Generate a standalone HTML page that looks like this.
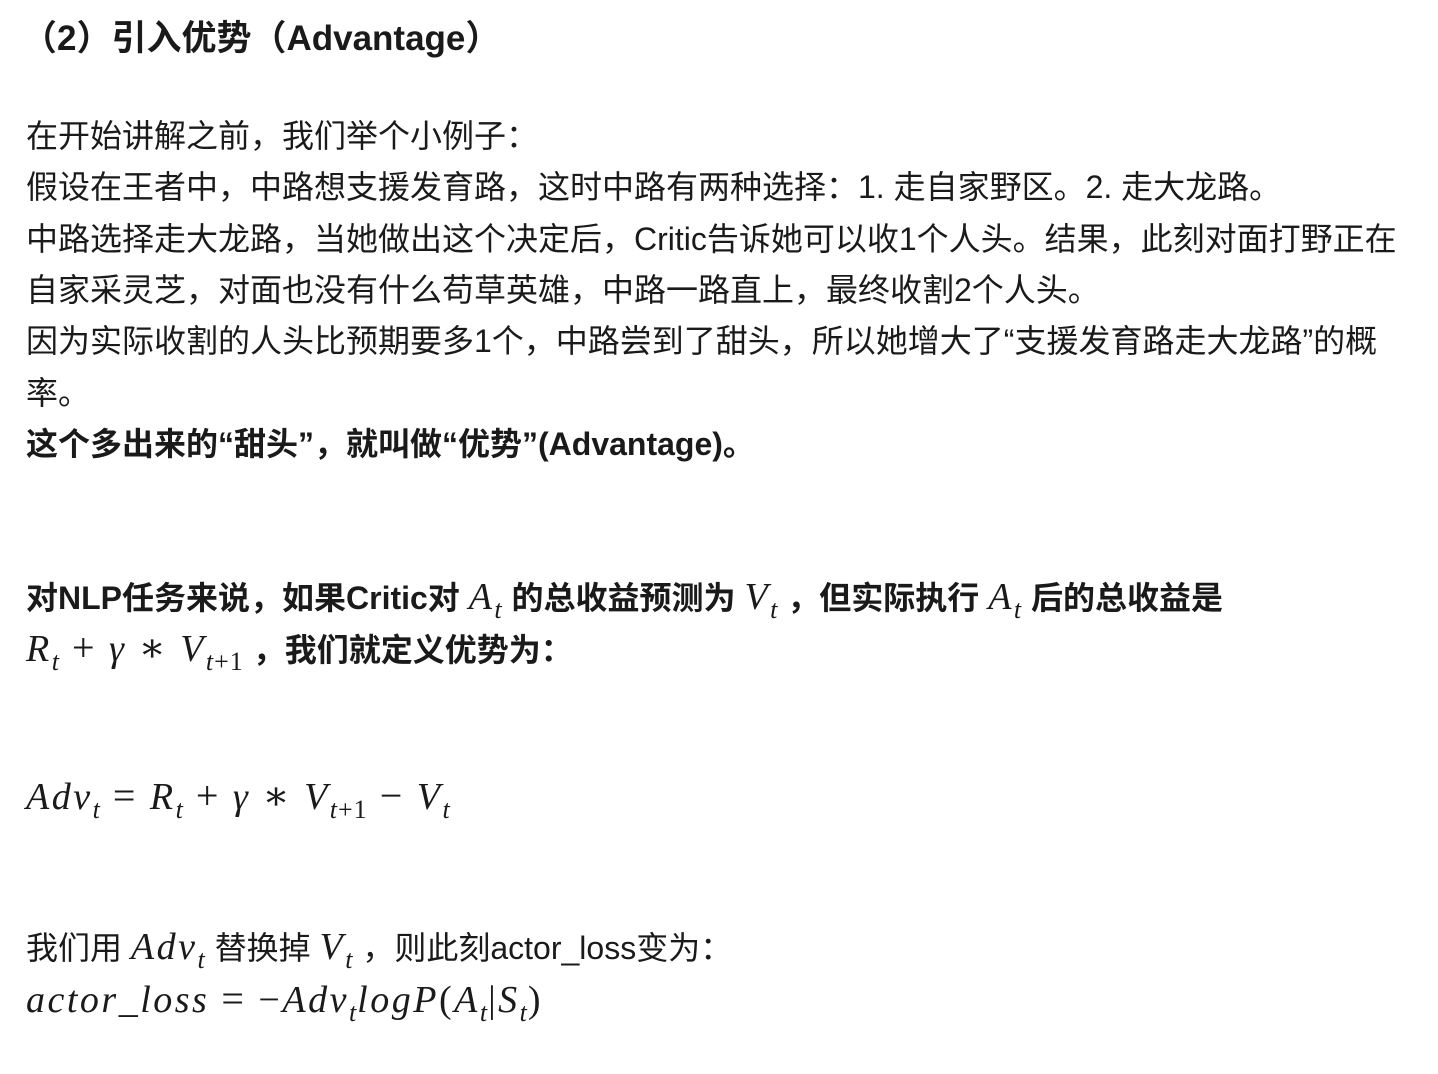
<!DOCTYPE html>
<html><head><meta charset="utf-8"><style>
body{margin:0;background:#fff;width:1438px;height:1074px;overflow:hidden;position:relative;font-family:"Liberation Sans","Noto Sans CJK SC",sans-serif;color:#1a1a1a;font-size:32px}
.l{position:absolute;left:26px;white-space:nowrap;line-height:52px;height:52px}
b{font-weight:bold}
.m{font-family:"Liberation Serif","DejaVu Serif",serif;font-style:italic;font-size:38px;font-weight:normal;letter-spacing:2.5px}
.m sub{font-size:26px;vertical-align:-9px;letter-spacing:1px}
.r{font-style:normal}
.o{font-style:normal;margin:0 12px;font-size:40px}
</style></head><body>
<div class="l" style="top:13px;left:22px;font-size:35px"><b>（2）引入优势（Advantage）</b></div>
<div class="l" style="top:110px">在开始讲解之前，我们举个小例子：</div>
<div class="l" style="top:161px">假设在王者中，中路想支援发育路，这时中路有两种选择：1. 走自家野区。2. 走大龙路。</div>
<div class="l" style="top:213px">中路选择走大龙路，当她做出这个决定后，Critic告诉她可以收1个人头。结果，此刻对面打野正在</div>
<div class="l" style="top:264px">自家采灵芝，对面也没有什么苟草英雄，中路一路直上，最终收割2个人头。</div>
<div class="l" style="top:315px">因为实际收割的人头比预期要多1个，中路尝到了甜头，所以她增大了“支援发育路走大龙路”的概</div>
<div class="l" style="top:367px">率。</div>
<div class="l" style="top:418px"><b>这个多出来的“甜头”，就叫做“优势”(Advantage)。</b></div>
<div class="l" style="top:571px"><b>对NLP任务来说，如果Critic对 <span class="m">A<sub>t</sub></span> 的总收益预测为 <span class="m">V<sub>t</sub></span> ，但实际执行 <span class="m">A<sub>t</sub></span> 后的总收益是</b></div>
<div class="l" style="top:622px"><b><span class="m">R<sub>t</sub><span class="o">+</span>γ<span class="o">∗</span>V<sub>t<span class="r">+1</span></sub></span> ，我们就定义优势为：</b></div>
<div class="l" style="top:770px"><span class="m">Adv<sub>t</sub><span class="o">=</span>R<sub>t</sub><span class="o">+</span>γ<span class="o">∗</span>V<sub>t<span class="r">+1</span></sub><span class="o">−</span>V<sub>t</sub></span></div>
<div class="l" style="top:921px">我们用 <span class="m">Adv<sub>t</sub></span> 替换掉 <span class="m">V<sub>t</sub></span> ，则此刻actor_loss变为：</div>
<div class="l" style="top:973px"><span class="m">actor_loss<span class="o">=</span><span class="r">−</span>Adv<sub>t</sub>logP<span class="r">(</span>A<sub>t</sub><span class="r">|</span>S<sub>t</sub><span class="r">)</span></span></div>
</body></html>
